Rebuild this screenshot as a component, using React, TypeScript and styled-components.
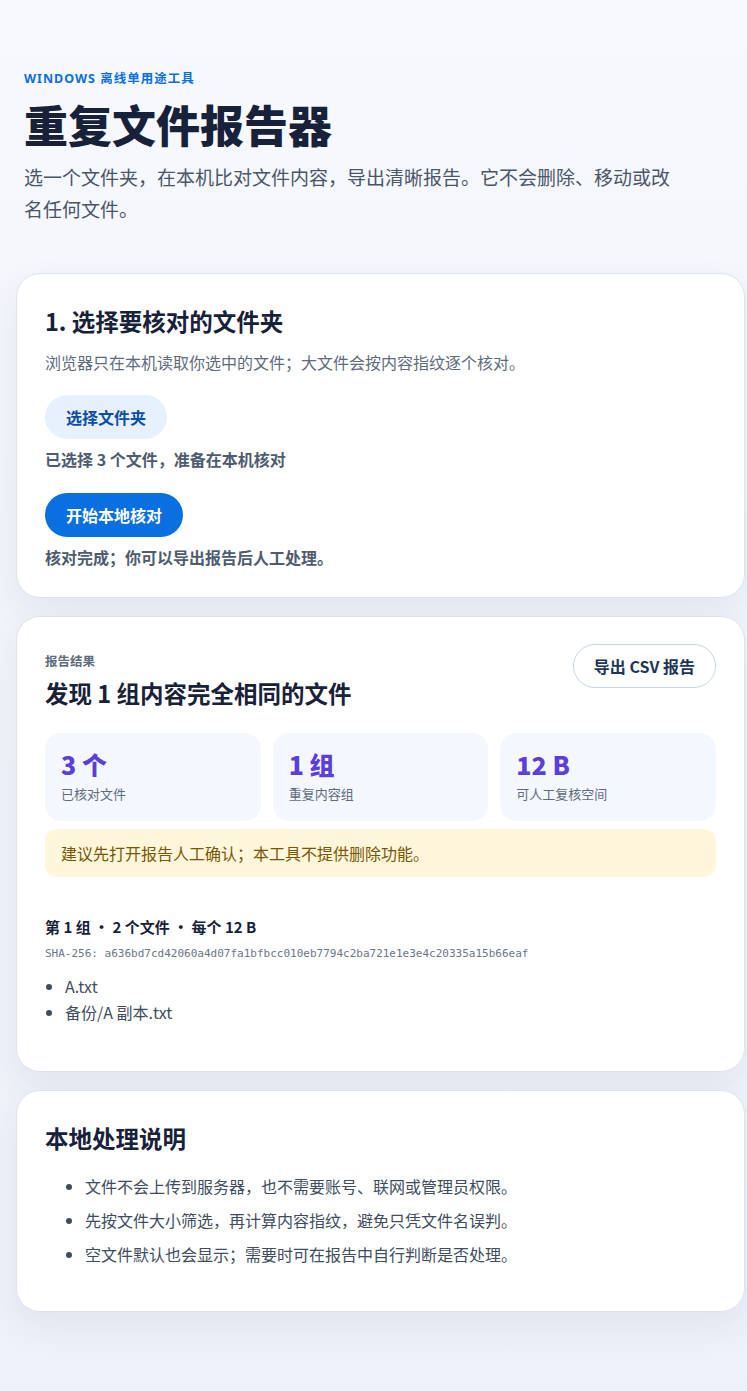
import styled, { createGlobalStyle } from "styled-components";

const GlobalStyle = createGlobalStyle`
    * { box-sizing: border-box; }
    html, body {
        margin: 0;
        padding: 0;
    }
    body {
        font-family: "Noto Sans", "Noto Sans CJK SC", sans-serif;
        background: linear-gradient(180deg, #f7f9fd 0%, #f1f4fa 40%, #eef1f9 100%);
        min-height: 1391px;
        color: #1a2238;
    }
`;

const Page = styled.main`
    width: 747px;
    padding: 68px 2px 80px 16px;
`;

const Hero = styled.header`
    padding: 0 8px;
    margin-bottom: 48px;
`;

const Eyebrow = styled.div`
    font-size: 12.5px;
    font-weight: 700;
    letter-spacing: 0.08em;
    color: #0a6fe0;
    margin-bottom: 11px;
`;

const Title = styled.h1`
    margin: 0 0 10px;
    font-size: 44px;
    line-height: 1.2;
    font-weight: 800;
    color: #18213a;
    font-family: "Noto Sans CJK SC", sans-serif;
`;

const Lead = styled.p`
    margin: 0;
    max-width: 660px;
    font-size: 19px;
    line-height: 32px;
    color: #4a5568;
    font-family: "Noto Sans CJK SC", sans-serif;
`;

const Card = styled.section`
    background: #ffffff;
    border: 1px solid #dde3ef;
    border-radius: 24px;
    padding: 32px 28px 27px;
    box-shadow: 0 14px 36px rgba(30, 50, 100, 0.07);
    & + & {
        margin-top: 18px;
    }
`;

const CardTitle = styled.h2`
    margin: 0 0 14px;
    font-size: 23.5px;
    line-height: 1.3;
    font-weight: 700;
    color: #18213a;
    font-family: "Noto Sans CJK SC", sans-serif;
`;

const Muted = styled.p`
    margin: 0 0 19px;
    font-size: 16px;
    line-height: 1.6;
    color: #5f6b7d;
    font-family: "Noto Sans CJK SC", sans-serif;
`;

const Status = styled.p`
    margin: 8px 0 20px;
    font-size: 16px;
    line-height: 1.6;
    font-weight: 700;
    color: #4f5b6e;
    font-family: "Noto Sans CJK SC", sans-serif;
    &:last-child {
        margin-bottom: 0;
    }
`;

const PillButton = styled.button<{ $variant: "soft" | "primary" | "outline" }>`
    display: inline-flex;
    align-items: center;
    justify-content: center;
    height: 44px;
    padding: 0 20px;
    border-radius: 999px;
    font-family: "Noto Sans CJK SC", sans-serif;
    font-size: 16px;
    font-weight: 700;
    cursor: pointer;
    border: 1px solid
        ${p => (p.$variant === "outline" ? "#c8d5ea" : "transparent")};
    background: ${p =>
        p.$variant === "primary" ? "#0a70e2" : p.$variant === "soft" ? "#e7f0fd" : "#ffffff"};
    color: ${p =>
        p.$variant === "primary" ? "#ffffff" : p.$variant === "soft" ? "#0b4ea6" : "#1d3557"};
`;

const ResultHead = styled.div`
    display: flex;
    justify-content: space-between;
    align-items: flex-start;
    margin-top: -5px;
    margin-bottom: 24px;
`;

const Kicker = styled.div`
    font-size: 12.5px;
    line-height: 18px;
    font-weight: 600;
    color: #5f6b7d;
    margin-top: 8px;
    margin-bottom: 8px;
    font-family: "Noto Sans CJK SC", sans-serif;
`;

const ResultTitle = styled(CardTitle)`
    margin: 0;
`;

const Stats = styled.div`
    display: grid;
    grid-template-columns: repeat(3, 1fr);
    gap: 12px;
    margin-bottom: 8px;
`;

const Stat = styled.div`
    background: #f4f7fd;
    border-radius: 16px;
    padding: 14px 16px 16px;
    height: 88px;
`;

const StatValue = styled.div`
    font-size: 25px;
    line-height: 34px;
    font-weight: 800;
    color: #5b3fd8;
    font-family: "Noto Sans CJK SC", sans-serif;
`;

const StatLabel = styled.div`
    margin-top: 3px;
    font-size: 13px;
    line-height: 1.5;
    color: #5f6b7d;
    font-family: "Noto Sans CJK SC", sans-serif;
`;

const Notice = styled.div`
    background: #fff6dc;
    border-radius: 12px;
    padding: 0 16px;
    height: 48px;
    display: flex;
    align-items: center;
    font-size: 16px;
    color: #7a5600;
    font-family: "Noto Sans CJK SC", sans-serif;
    margin-bottom: 38px;
`;

const Group = styled.div`
    padding-bottom: 19px;
`;

const GroupTitle = styled.h3`
    margin: 0 0 8px;
    font-size: 15px;
    line-height: 24px;
    font-weight: 700;
    color: #18213a;
    font-family: "Noto Sans CJK SC", sans-serif;
`;

const Hash = styled.div`
    font-family: "DejaVu Sans Mono", monospace;
    font-size: 11px;
    line-height: 13px;
    color: #6b7587;
    margin-bottom: 13px;
`;

const FileList = styled.ul<{ $indent: number; $gap: number }>`
    margin: 0;
    padding-left: ${p => p.$indent}px;
    font-size: 16px;
    line-height: ${p => p.$gap}px;
    color: #414c5e;
    font-family: "Noto Sans CJK SC", sans-serif;
    li::marker {
        color: #414c5e;
    }
`;

const NotesTitle = styled(CardTitle)`
    margin: 0 0 16px;
`;

const Notes = styled.div`
    padding-bottom: 13px;
`;

function App() {
    return (
        <>
            <GlobalStyle />
            <Page>
                <Hero>
                    <Eyebrow>WINDOWS 离线单用途工具</Eyebrow>
                    <Title>重复文件报告器</Title>
                    <Lead>
                        选一个文件夹，在本机比对文件内容，导出清晰报告。它不会删除、移动或改名任何文件。
                    </Lead>
                </Hero>

                <Card>
                    <CardTitle>1. 选择要核对的文件夹</CardTitle>
                    <Muted>浏览器只在本机读取你选中的文件；大文件会按内容指纹逐个核对。</Muted>
                    <PillButton $variant={"soft"}>选择文件夹</PillButton>
                    <Status>已选择 3 个文件，准备在本机核对</Status>
                    <PillButton $variant={"primary"}>开始本地核对</PillButton>
                    <Status>核对完成；你可以导出报告后人工处理。</Status>
                </Card>

                <Card>
                    <ResultHead>
                        <div>
                            <Kicker>报告结果</Kicker>
                            <ResultTitle>发现 1 组内容完全相同的文件</ResultTitle>
                        </div>
                        <PillButton $variant={"outline"}>导出 CSV 报告</PillButton>
                    </ResultHead>

                    <Stats>
                        <Stat>
                            <StatValue>3 个</StatValue>
                            <StatLabel>已核对文件</StatLabel>
                        </Stat>
                        <Stat>
                            <StatValue>1 组</StatValue>
                            <StatLabel>重复内容组</StatLabel>
                        </Stat>
                        <Stat>
                            <StatValue>12 B</StatValue>
                            <StatLabel>可人工复核空间</StatLabel>
                        </Stat>
                    </Stats>

                    <Notice>建议先打开报告人工确认；本工具不提供删除功能。</Notice>

                    <Group>
                        <GroupTitle>第 1 组 · 2 个文件 · 每个 12 B</GroupTitle>
                        <Hash>
                            SHA-256: a636bd7cd42060a4d07fa1bfbcc010eb7794c2ba721e1e3e4c20335a15b66eaf
                        </Hash>
                        <FileList $indent={20} $gap={26}>
                            <li>A.txt</li>
                            <li>备份/A 副本.txt</li>
                        </FileList>
                    </Group>
                </Card>

                <Card>
                    <NotesTitle>本地处理说明</NotesTitle>
                    <Notes>
                        <FileList $indent={40} $gap={34}>
                            <li>文件不会上传到服务器，也不需要账号、联网或管理员权限。</li>
                            <li>先按文件大小筛选，再计算内容指纹，避免只凭文件名误判。</li>
                            <li>空文件默认也会显示；需要时可在报告中自行判断是否处理。</li>
                        </FileList>
                    </Notes>
                </Card>
            </Page>
        </>
    );
}

export default App;
